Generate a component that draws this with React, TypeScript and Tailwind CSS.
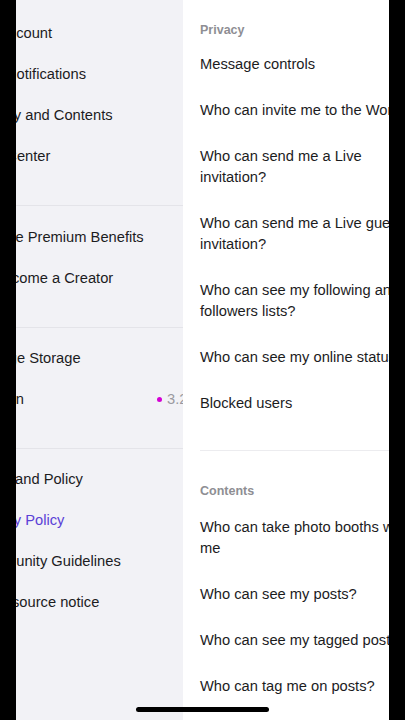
import React from "react";

type MenuRow = { label: string; shift: number; accent?: boolean; version?: string };

const groups: { pt: string; rows: MenuRow[] }[] = [
  {
    pt: "pt-[13px]",
    rows: [
      { label: "Account", shift: -17 },
      { label: "Notifications", shift: -10 },
      { label: "Privacy and Contents", shift: -43 },
      { label: "Help Center", shift: -44 },
    ],
  },
  {
    pt: "pt-[11px]",
    rows: [
      { label: "Weverse Premium Benefits", shift: -50 },
      { label: "Become a Creator", shift: -22 },
    ],
  },
  {
    pt: "pt-[10px]",
    rows: [
      { label: "Manage Storage", shift: -44 },
      { label: "Version", shift: -41, version: "3.25.1" },
    ],
  },
  {
    pt: "pt-[10px]",
    rows: [
      { label: "Terms and Policy", shift: -45 },
      { label: "Privacy Policy", shift: -43, accent: true },
      { label: "Community Guidelines", shift: -43 },
      { label: "Open source notice", shift: -44 },
    ],
  },
];

const privacy = [
  "Message controls",
  "Who can invite me to the World?",
  "Who can send me a Live invitation?",
  "Who can send me a Live guest invitation?",
  "Who can see my following and followers lists?",
  "Who can see my online status",
  "Blocked users",
];

const contents = [
  "Who can take photo booths with me",
  "Who can see my posts?",
  "Who can see my tagged posts?",
  "Who can tag me on posts?",
];

function LeftMenu() {
  return (
    <div className="w-[167px] shrink-0 overflow-hidden bg-[#f2f2f6]">
      {groups.map((g, gi) => (
        <div key={gi} className={gi < groups.length - 1 ? "border-b border-[#e4e4e9]" : ""}>
          <div className={`${g.pt} pb-[28px]`}>
            {g.rows.map((r) => (
              <div key={r.label} className="flex h-[41px] items-center whitespace-nowrap">
                {r.version ? (
                  <>
                    <div className="w-[182px] shrink-0" style={{ marginLeft: r.shift }}>
                      {r.label}
                    </div>
                    <span className="h-[5px] w-[5px] shrink-0 rounded-full bg-[#d400d4]" />
                    <span className="ml-[5px] text-[#9a9aa0]">{r.version}</span>
                  </>
                ) : (
                  <div className={r.accent ? "text-[#5b41d6]" : ""} style={{ marginLeft: r.shift }}>
                    {r.label}
                  </div>
                )}
              </div>
            ))}
          </div>
        </div>
      ))}
    </div>
  );
}

function Row({ text }: { text: string }) {
  return <div className="py-[12.5px] leading-[21px]">{text}</div>;
}

function Settings() {
  return (
    <div className="w-[206px] shrink-0 overflow-hidden bg-white">
      <div className="w-[262px] pl-[17px]">
        <div className="pt-[21px] pb-[2px] text-[12.5px] font-semibold leading-[18px] text-[#8e8e93]">
          Privacy
        </div>
        <div className="w-[220px]">
          {privacy.map((t) => (
            <Row key={t} text={t} />
          ))}
        </div>
        <div className="mt-[24px] border-t border-[#ececef]" />
        <div className="pt-[31px] pb-[4px] text-[12.5px] font-semibold leading-[18px] text-[#8e8e93]">
          Contents
        </div>
        <div className="w-[220px]">
          {contents.map((t) => (
            <Row key={t} text={t} />
          ))}
        </div>
      </div>
    </div>
  );
}

export default function App() {
  return (
    <div
      className="relative flex h-[720px] w-[405px] overflow-hidden bg-black text-[14.7px] text-[#1c1c1e]"
      style={{ fontFamily: '"Liberation Sans", Arial, sans-serif' }}
    >
      <div className="w-[16px] shrink-0 bg-black" />
      <LeftMenu />
      <Settings />
      <div className="flex-1 bg-black" />
      <div className="absolute bottom-[8px] left-[136px] h-[5px] w-[133px] rounded-full bg-black" />
    </div>
  );
}
